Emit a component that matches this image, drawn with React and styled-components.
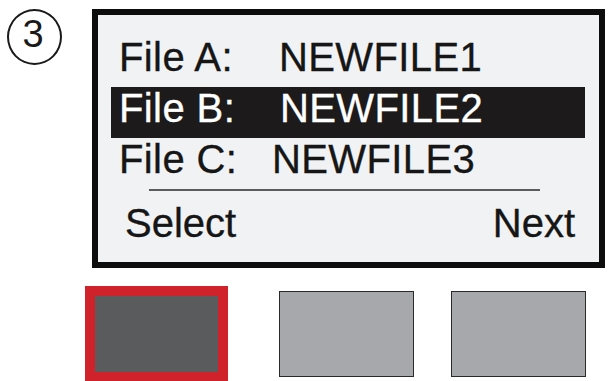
import React from "react";
import styled, { createGlobalStyle } from "styled-components";

const GlobalStyle = createGlobalStyle`
  html, body {
    margin: 0;
    padding: 0;
    background: #ffffff;
  }
  body {
    font-family: "Liberation Sans", Arial, sans-serif;
    color: #111111;
  }
`;

const Page = styled.div`
  width: 609px;
  height: 381px;
  overflow: hidden;
  display: flex;
  flex-direction: column;
`;

const TopRow = styled.div`
  display: flex;
  align-items: flex-start;
  padding-top: 9px;
`;

const StepBadge = styled.div`
  width: 55px;
  height: 56px;
  box-sizing: border-box;
  margin-left: 7px;
  border: 2px solid #1a1a1a;
  border-radius: 50%;
  display: flex;
  align-items: center;
  justify-content: center;
  padding: 0 3px 7px 0;
  font-size: 38px;
  line-height: 1;
  color: #1a1a1a;
`;

const Screen = styled.div`
  width: 513px;
  height: 259px;
  box-sizing: border-box;
  margin-left: 30px;
  border: 6px solid #0d0d0d;
  background: #f1f2f4;
  display: flex;
  flex-direction: column;
  padding: 21px 14px 0 13px;
`;

const FileList = styled.div`
  display: flex;
  flex-direction: column;
`;

const FileRow = styled.div`
  display: flex;
  height: 51px;
  box-sizing: border-box;
  padding: 0 0 9px 8px;
  font-size: 40px;
  line-height: 42px;
  letter-spacing: 0.4px;
  white-space: nowrap;
  -webkit-text-stroke: 0.35px currentColor;
  background: ${(p) => (p.$active ? "#1c1a1a" : "transparent")};
  color: ${(p) => (p.$active ? "#ffffff" : "#161616")};
`;

const Label = styled.span`
  width: ${(p) => p.$w}px;
  flex: none;
`;

const Divider = styled.div`
  height: 1.5px;
  width: 391px;
  margin-left: 38px;
  background: #5a5b5d;
`;

const SoftKeys = styled.div`
  display: flex;
  justify-content: space-between;
  margin-top: 11px;
  padding: 0 10px 0 14px;
  font-size: 40px;
  line-height: 42px;
  -webkit-text-stroke: 0.35px currentColor;
  color: #161616;
`;

const ButtonRow = styled.div`
  display: flex;
  align-items: center;
  margin-top: 18px;
  padding-left: 85px;
`;

const HardKey = styled.div`
  flex: none;
  box-sizing: border-box;
  width: ${(p) => (p.$selected ? 143 : 135)}px;
  height: ${(p) => (p.$selected ? 96 : 86)}px;
  margin-left: ${(p) => p.$gap || 0}px;
  background: ${(p) => (p.$selected ? "#595b5d" : "#a6a8ab")};
  border: ${(p) =>
    p.$selected ? "10px solid #d0222a" : "1.5px solid #2a2a2a"};
`;

const files = [
  { label: "File A:", value: "NEWFILE1", w: 160 },
  { label: "File B:", value: "NEWFILE2", w: 161, active: true },
  { label: "File C:", value: "NEWFILE3", w: 153 },
];

export default function App() {
  return (
    <Page>
      <GlobalStyle />
      <TopRow>
        <StepBadge>3</StepBadge>
        <Screen>
          <FileList>
            {files.map((f) => (
              <FileRow key={f.label} $active={f.active}>
                <Label $w={f.w}>{f.label}</Label>
                <span>{f.value}</span>
              </FileRow>
            ))}
          </FileList>
          <Divider />
          <SoftKeys>
            <span>Select</span>
            <span>Next</span>
          </SoftKeys>
        </Screen>
      </TopRow>
      <ButtonRow>
        <HardKey $selected />
        <HardKey $gap={51} />
        <HardKey $gap={37} />
      </ButtonRow>
    </Page>
  );
}
